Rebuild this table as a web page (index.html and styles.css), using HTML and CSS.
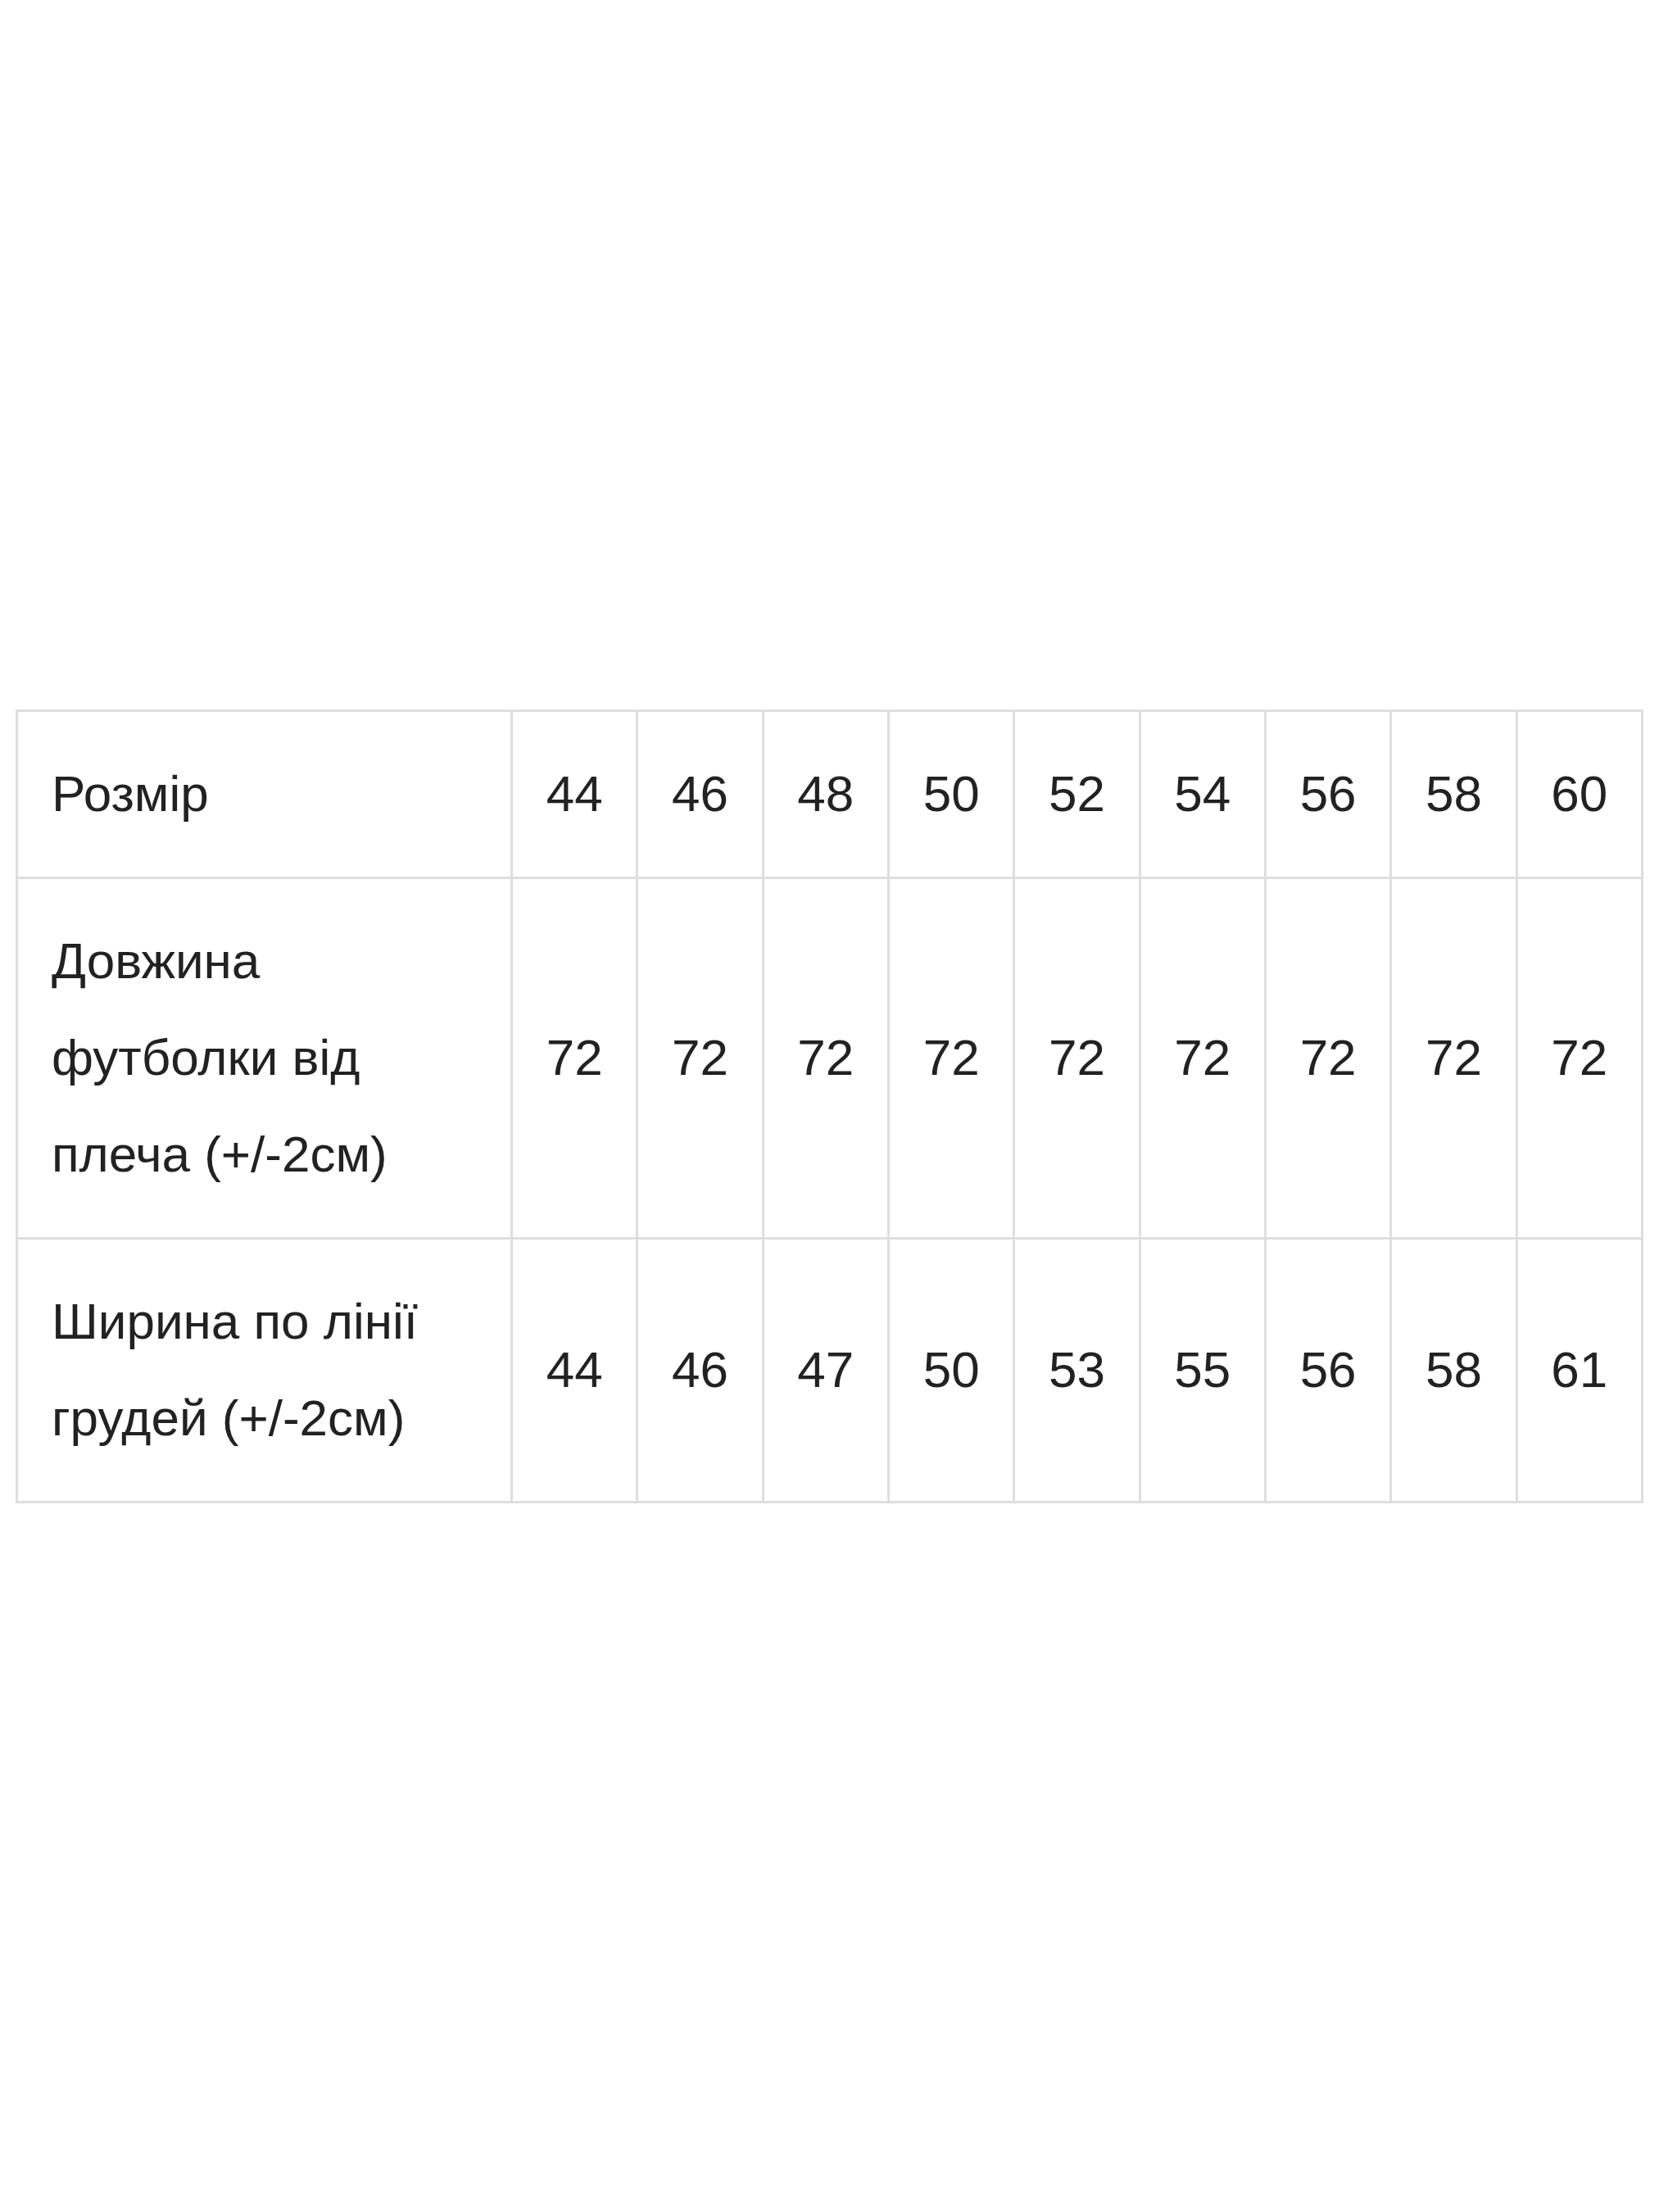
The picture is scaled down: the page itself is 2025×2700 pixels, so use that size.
FILE: index.html
```html
<!DOCTYPE html>
<html lang="uk">
<head>
<meta charset="utf-8">
<title>Розмірна сітка</title>
<link rel="stylesheet" href="styles.css">
</head>
<body>
<main class="page">
  <table class="sizes">
    <colgroup>
      <col class="col-label">
      <col><col><col><col><col><col><col><col><col>
    </colgroup>
    <tbody>
      <tr>
        <td class="label">Розмір</td>
        <td>44</td><td>46</td><td>48</td><td>50</td><td>52</td><td>54</td><td>56</td><td>58</td><td>60</td>
      </tr>
      <tr>
        <td class="label">Довжина футболки від плеча (+/-2см)</td>
        <td>72</td><td>72</td><td>72</td><td>72</td><td>72</td><td>72</td><td>72</td><td>72</td><td>72</td>
      </tr>
      <tr>
        <td class="label">Ширина по лінії грудей (+/-2см)</td>
        <td>44</td><td>46</td><td>47</td><td>50</td><td>53</td><td>55</td><td>56</td><td>58</td><td>61</td>
      </tr>
    </tbody>
  </table>
</main>
</body>
</html>
```

FILE: styles.css
```css
html, body {
  margin: 0;
  padding: 0;
  background: #ffffff;
}

.page {
  padding: 866px 0 0 19px;
  height: 2700px;
  box-sizing: border-box;
}

.sizes {
  border-collapse: collapse;
  table-layout: fixed;
  width: 1987px;
  font-family: "Liberation Sans", Arial, sans-serif;
  font-size: 62px;
  color: #222222;
}

.col-label {
  width: 604px;
}

.sizes td {
  border: 3px solid #dedede;
  padding: 41px 10px 42px;
  line-height: 118px;
  text-align: center;
  vertical-align: middle;
}

.sizes td.label {
  text-align: left;
  padding-left: 41px;
  padding-right: 40px;
}
```
